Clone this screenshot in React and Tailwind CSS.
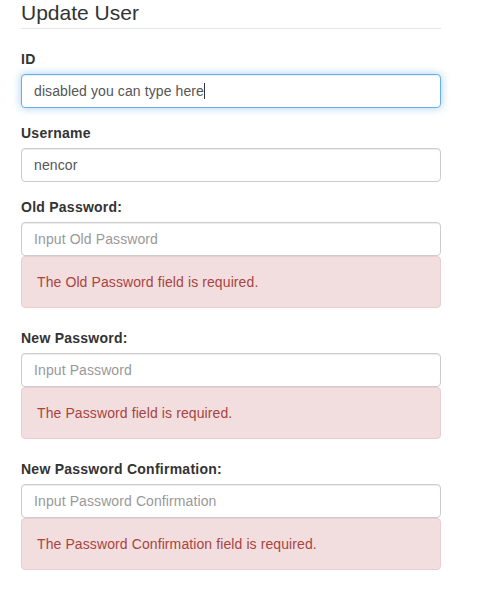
import React from 'react';

const fieldClass =
  'block w-full h-[34px] px-3 py-[6px] text-[14px] leading-[20px] tracking-[0.1px] text-[#555] bg-white border border-[#ccc] rounded-[4px] shadow-[inset_0_1px_1px_rgba(0,0,0,0.075)] outline-none placeholder:text-[#999]';

const Alert = ({ children }) => (
  <div className="mb-5 p-[15px] text-[14px] leading-[20px] tracking-[0.1px] text-[#a94442] bg-[#f2dede] border border-[#ebccd1] rounded-[4px]">
    {children}
  </div>
);

const Field = ({ label, children }) => (
  <div className="mb-[15px]">
    <label className="block mb-[5px] text-[14px] leading-[20px] tracking-[0.25px] font-bold text-[#333]">{label}</label>
    {children}
  </div>
);

const App = () => {
  return (
    <div
      className="min-h-screen bg-white"
      style={{ fontFamily: '"Liberation Sans", Arial, sans-serif' }}
    >
      <div className="w-[420px] ml-[21px]">
        {/* legend */}
        <div className="-mt-[2px] mb-5 h-[31px] text-[21px] leading-[30px] text-[#333] border-b border-[#e5e5e5]">
          Update User
        </div>

        <Field label="ID">
          {/* focused input with caret */}
          <div className="flex items-center w-full h-[34px] px-3 text-[14px] leading-[20px] tracking-[0.1px] text-[#555] bg-white border border-[#66afe9] rounded-[4px] shadow-[inset_0_1px_1px_rgba(0,0,0,0.075),0_0_8px_rgba(102,175,233,0.6)]">
            <span>disabled you can type here</span>
            <span className="inline-block w-px h-[16px] bg-[#333]"></span>
          </div>
        </Field>

        <Field label="Username">
          <input className={fieldClass} type="text" value="nencor" readOnly />
        </Field>

        <Field label="Old Password:">
          <input className={fieldClass} type="password" placeholder="Input Old Password" readOnly />
          <Alert>The Old Password field is required.</Alert>
        </Field>

        <Field label="New Password:">
          <input className={fieldClass} type="password" placeholder="Input Password" readOnly />
          <Alert>The Password field is required.</Alert>
        </Field>

        <Field label="New Password Confirmation:">
          <input className={fieldClass} type="password" placeholder="Input Password Confirmation" readOnly />
          <Alert>The Password Confirmation field is required.</Alert>
        </Field>
      </div>
    </div>
  );
};

export default App;
